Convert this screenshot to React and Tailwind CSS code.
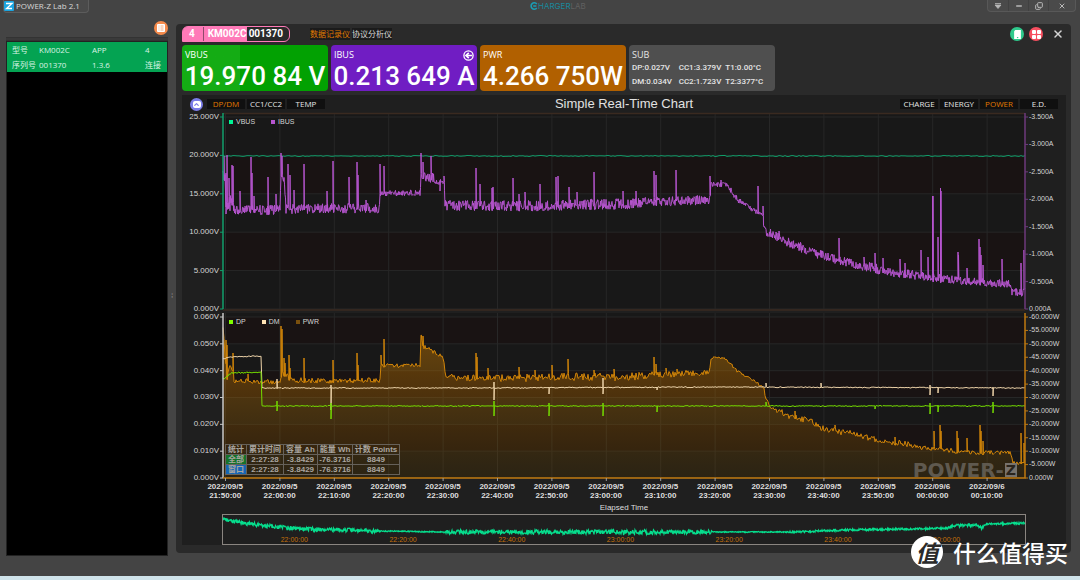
import React from 'react';
import { ChevronUp, Copy, Minus, X } from 'lucide-react';

const VBUS_TICKS = ['25.000V', '20.000V', '15.000V', '10.000V', '5.000V', '0.000V'];
const IBUS_TICKS = ['-3.500A', '-3.000A', '-2.500A', '-2.000A', '-1.500A', '-1.000A', '-0.500A', '0.000A'];
const DATA_TICKS = ['0.060V', '0.050V', '0.040V', '0.030V', '0.020V', '0.010V', '0.000V'];
const PWR_TICKS = [
  '-60.000W', '-55.000W', '-50.000W', '-45.000W', '-40.000W', '-35.000W', '-30.000W',
  '-25.000W', '-20.000W', '-15.000W', '-10.000W', '-5.000W', '0.000W',
];
const TIMES = [
  ['2022/09/5', '21:50:00'], ['2022/09/5', '22:00:00'], ['2022/09/5', '22:10:00'],
  ['2022/09/5', '22:20:00'], ['2022/09/5', '22:30:00'], ['2022/09/5', '22:40:00'],
  ['2022/09/5', '22:50:00'], ['2022/09/5', '23:00:00'], ['2022/09/5', '23:10:00'],
  ['2022/09/5', '23:20:00'], ['2022/09/5', '23:30:00'], ['2022/09/5', '23:40:00'],
  ['2022/09/5', '23:50:00'], ['2022/09/6', '00:00:00'], ['2022/09/6', '00:10:00'],
];
const OVERVIEW_TIMES = ['22:00:00', '22:20:00', '22:40:00', '23:00:00', '23:20:00', '23:40:00', '00:00:00'];

// keys: [x, y, noise], spikes: [x, top, bottom]
const IBUS = {
  keys: [
    [0, 62, 8], [2, 66, 10], [3, 88, 20], [9, 92, 16], [11, 97, 9], [50, 97, 10], [57, 96, 10],
    [58, 62, 8], [61, 68, 8], [63, 96, 10], [156, 95, 10], [157, 80, 6], [197, 80, 6], [198, 64, 10],
    [211, 65, 11], [212, 69, 5], [221, 69, 6], [222, 92, 11], [300, 93, 11], [400, 91, 11],
    [440, 88, 10], [487, 87, 10], [488, 71, 5], [504, 72, 5], [514, 86, 6], [527, 95, 5],
    [540, 103, 4], [541, 117, 10], [557, 125, 9], [567, 130, 10], [590, 139, 10], [607, 145, 9],
    [640, 153, 10], [674, 160, 10], [707, 164, 9], [740, 168, 8], [787, 171, 8], [789, 179, 8],
    [800, 180, 8], [801, 172, 10],
  ],
  spikes: [
    [1, 43], [4, 42], [3, 60, 101], [6, 65], [9, 52], [10, 53], [17, 78], [28, 44], [28.6, 60], [31, 83],
    [45, 64], [53, 81], [58, 40], [59, 43], [65, 51], [67, 62], [71, 77], [81, 51], [104, 78], [110, 48],
    [126, 64], [134, 49], [135, 62], [143, 87], [157, 51], [161, 53], [198, 40], [200, 49], [208, 43],
    [221, 63], [217, 70, 78], [253, 55], [257, 71], [269, 75], [270, 74], [290, 65], [296, 81], [302, 79],
    [317, 71], [333, 64], [335, 63], [346, 74], [354, 79], [371, 59], [400, 78], [413, 78], [431, 58],
    [433, 62], [453, 57], [487, 63], [498, 67], [535, 73], [540, 93], [556, 118], [616, 125], [641, 144],
    [652, 140], [660, 145], [677, 146], [682, 150], [698, 137], [705, 144], [709.5, 83], [710, 83],
    [715, 124], [717.5, 75], [718, 78], [735, 139], [735.5, 142], [744, 155], [756, 126], [757, 134],
    [758, 142], [760, 152], [779, 146], [798, 150], [801, 137],
  ],
};
const PWR = {
  keys: [
    [0, 16, 3], [2, 40, 30], [4, 58, 26], [9, 60, 20], [12, 67, 6], [30, 69, 5], [57, 68, 6], [59, 60, 6],
    [69, 67, 6], [110, 68, 5], [157, 67, 5], [158, 53, 4], [197, 52, 4], [198, 24, 6], [201, 34, 5],
    [208, 37, 5], [220, 44, 4], [223, 63, 6], [237, 65, 6], [300, 65, 8], [340, 64, 8], [400, 64, 8],
    [450, 61, 7], [486, 60, 6], [488, 46, 4], [492, 44, 3], [502, 45, 3], [514, 58, 3], [530, 67, 3],
    [541, 75, 3], [543, 88, 6], [550, 95, 5], [567, 103, 7], [584, 107, 8], [597, 114, 7], [624, 120, 7],
    [650, 126, 6], [677, 130, 6], [704, 135, 5], [744, 139, 5], [787, 140, 4], [790, 149, 4], [801, 151, 3],
  ],
  spikes: [
    [3, 27], [4, 32], [10, 40], [25, 61], [58, 13], [59, 16], [61, 45], [62, 50], [66, 42], [67, 55],
    [81, 45], [110, 47], [134, 40], [135, 52], [158, 42], [161, 26], [198, 22], [200, 23], [253, 40],
    [254, 44], [265, 55], [296, 54], [312, 57], [329, 52], [345, 46], [371, 57], [391, 56], [431, 44],
    [433, 51], [443, 55], [454, 56], [572, 98], [612, 112], [672, 124], [710.5, 118], [717, 112],
    [718, 118], [734, 118], [735, 125], [744, 125], [757, 112], [758, 118], [760, 128], [797.5, 120],
    [801, 130],
  ],
};
const DM = {
  keys: [[0, 46, 1], [7, 44, 1], [38, 43, 1], [39, 75, 1], [250, 75, 1], [500, 74, 1], [802, 75, 1]],
  spikes: [
    [54, 66], [108, 72, 97], [271, 69, 87], [326, 74, 81], [380, 65, 81], [434, 74, 77], [543, 70],
    [598, 70], [706.5, 72, 82], [715, 74, 80], [769.5, 74, 83],
  ],
};
const DP = {
  keys: [[0, 66, 2], [8, 60, 2], [38, 59, 1], [39, 93, 1], [802, 93, 1]],
  spikes: [
    [54, 88, 98], [108, 90, 106], [271, 88, 103], [326, 90, 103], [380, 90, 103], [434, 93, 99],
    [543, 89], [652, 93, 96], [706.5, 90, 101], [715, 92, 99], [769.5, 89, 100],
  ],
};
const VBUS = { keys: [[0, 43, 1], [802, 43, 1]], spikes: [] };
const OVERVIEW = {
  keys: [
    [0, 4, 3], [20, 8, 4], [52, 12, 4], [85, 14, 4], [152, 16, 4], [158, 16, 1], [220, 17, 1], [224, 17, 4],
    [400, 17, 5], [487, 17, 4], [490, 17, 1], [560, 17, 1], [570, 17, 2], [624, 15, 2], [690, 14, 2],
    [725, 13, 2], [730, 11, 3], [754, 10, 3], [759, 13, 3], [764, 9, 2], [802, 8, 2],
  ],
  spikes: [],
};

function createRandom(seed) {
  let value = seed;
  return () => {
    value = (value * 16807) % 2147483647;
    return value / 2147483647;
  };
}

function buildPath({ keys, spikes }, seed, step) {
  const random = createRandom(seed);
  const sorted = [...spikes].sort((a, b) => a[0] - b[0]);
  const points = [];
  let k = 0;
  let s = 0;
  for (let x = 0; x <= 802; x += step) {
    while (k < keys.length - 2 && keys[k + 1][0] <= x) k++;
    const [x0, y0, n0] = keys[k];
    const [x1, y1, n1] = keys[k + 1];
    const t = Math.min(1, (x - x0) / (x1 - x0));
    const y = y0 + (y1 - y0) * t + (random() - 0.5) * (n0 + (n1 - n0) * t);
    points.push(`${x} ${y.toFixed(1)}`);
    while (s < sorted.length && sorted[s][0] <= x) {
      const [, top, bottom] = sorted[s];
      points.push(`${x} ${top}`);
      if (bottom) points.push(`${x} ${bottom}`);
      points.push(`${x + 0.4} ${y.toFixed(1)}`);
      s++;
    }
  }
  return `M${points.join('L')}`;
}

const ibusPath = buildPath(IBUS, 17, 0.5);
const vbusPath = buildPath(VBUS, 5, 2);
const pwrPath = buildPath(PWR, 71, 1);
const dmPath = buildPath(DM, 33, 1);
const dpPath = buildPath(DP, 91, 1);
const overviewPath = buildPath(OVERVIEW, 44, 0.5);

function GridLines({ rows, bottom, redFirst, axis, rightAxis, rightRows }) {
  const rowHeight = (bottom - 4) / rows;
  const rightHeight = (bottom - 4) / rightRows;
  return (
    <g>
      <rect x="0" y="0" width="802" height={bottom} fill="#181818" />
      {Array.from({ length: rows }, (_, i) => (
        <rect
          key={i}
          x="0"
          y={4 + i * rowHeight}
          width="802"
          height={rowHeight}
          fill={(i % 2 === 0) === redFirst ? '#191313' : '#181818'}
        />
      ))}
      {Array.from({ length: rows + 1 }, (_, i) => (
        <g key={i}>
          <path d={`M0 ${4 + i * rowHeight}H802`} stroke="#272727" />
          <path d={`M-3 ${4 + i * rowHeight}H0`} stroke={axis} />
        </g>
      ))}
      {TIMES.map((_, i) => (
        <path key={i} d={`M${2.5 + i * 54.4} 0V${bottom}`} stroke="#272727" />
      ))}
      {Array.from({ length: rightRows + 1 }, (_, i) => (
        <path key={i} d={`M802 ${4 + i * rightHeight}h3`} stroke={rightAxis} />
      ))}
    </g>
  );
}

function AxisLabels({ ticks, side }) {
  return (
    <div
      className={
        side === 'left'
          ? "flex flex-col justify-between pr-1 text-right font-['Liberation_Sans',sans-serif] text-[8px] leading-[8px] text-[#d4d4d4]"
          : "flex flex-col justify-between pl-1 font-['Liberation_Sans',sans-serif] text-[7px] leading-[8px] text-[#d4d4d4]"
      }
    >
      {ticks.map((tick) => (
        <span key={tick}>{tick}</span>
      ))}
    </div>
  );
}

function Legend({ items }) {
  return (
    <ul className="absolute left-1.5 top-1 flex gap-4 font-['Liberation_Sans',sans-serif] text-[7px] leading-[10px] text-[#d4d4d4]">
      {items.map(([name, color]) => (
        <li key={name} className="flex items-center gap-[3px]">
          <span className={`size-1 ${color}`}></span>
          {name}
        </li>
      ))}
    </ul>
  );
}

function Reading({ name, value, color, children }) {
  return (
    <div className={`h-[46px] w-[146px] rounded-sm ${color}`}>
      <div className="flex items-center justify-between px-[3px] pt-1 text-[9px] leading-3">
        <span>{name}</span>
        {children}
      </div>
      <p className="whitespace-nowrap text-center font-['Roboto',sans-serif] text-[26px] font-medium leading-[30px]">{value}</p>
    </div>
  );
}

function TabButton({ label, active }) {
  return (
    <button
      type="button"
      className={`h-[10px] w-[38px] bg-[#101010] text-[8px] leading-[10px] ${active ? 'text-[#e07a00]' : 'text-[#e5e5e5]'}`}
    >
      {label}
    </button>
  );
}

function TitleBar() {
  return (
    <header className="relative flex h-[13px] items-start justify-between">
      <div className="ml-[3px] flex h-[13px] items-center gap-0.5 rounded-b-sm border border-t-0 border-[#5c5c5c] bg-[#4a4a4a] pr-2 text-[8px] leading-3 text-[#d8d8d8]">
        <svg viewBox="0 0 10 10" className="size-[10px]">
          <rect width="10" height="10" rx="1" fill="#1ba5e0" />
          <path d="M2 2.5H8L2.5 7.5H8" fill="none" stroke="#fff" strokeWidth="1.3" />
        </svg>
        POWER-Z Lab 2.1
      </div>
      <div className="absolute left-1/2 top-0 flex h-3 -translate-x-[10px] items-center font-['Inter',sans-serif] text-[8px] leading-3 text-[#19889b]">
        <svg viewBox="0 0 10 10" className="size-2">
          <path d="M8.5 2.5A4 4 0 1 0 8.5 7.5M8 5H4" fill="none" stroke="#1a9db5" strokeWidth="2" />
        </svg>
        <span>HARGER</span>
        <span className="text-[#606060]">LAB</span>
      </div>
      <div className="mr-1 flex h-3 rounded-b-sm border border-t-0 border-[#585858] bg-[#4a4a4a] text-[#b8b8b8]">
        <button type="button" aria-label="Menu" className="flex w-5 items-center justify-center">
          <svg viewBox="0 0 8 8" className="size-2">
            <path d="M1 1.5H7M1 3H7L4 6.5Z" fill="currentColor" stroke="currentColor" strokeWidth="0.8" />
          </svg>
        </button>
        <button type="button" aria-label="Minimize" className="flex w-5 items-center justify-center border-l border-[#414141]">
          <Minus className="size-2" strokeWidth={4} />
        </button>
        <button type="button" aria-label="Restore" className="flex w-5 items-center justify-center border-l border-[#414141]">
          <Copy className="size-2 -scale-y-100" strokeWidth={3} />
        </button>
        <button type="button" aria-label="Close" className="flex w-[27px] items-center justify-center border-l border-[#414141]">
          <X className="size-2" strokeWidth={3} />
        </button>
      </div>
    </header>
  );
}

function DeviceList() {
  return (
    <aside className="flex w-[168px] shrink-0 flex-col pb-5 pl-1.5">
      <div className="flex h-6 items-center justify-end pt-1.5">
        <button type="button" aria-label="Device list" className="flex size-[14px] items-center justify-center rounded-full bg-[#f58a4b]">
          <svg viewBox="0 0 8 8" className="size-2">
            <rect width="8" height="8" rx="1" fill="#fff" />
            <path d="M1.5 2H2.5M3.5 2H6.5M1.5 4H2.5M3.5 4H6.5M1.5 6H2.5M3.5 6H6.5" stroke="#f58a4b" strokeWidth="0.7" />
          </svg>
        </button>
      </div>
      <div className="h-1 border-y border-[#333333] bg-[#3a3a3a]"></div>
      <div className="flex-1 border border-[#222222] bg-black">
        <table className="w-full table-fixed bg-[#04a352] text-left text-[8px] leading-[15px] text-[#d9f3e4]">
          <tbody>
            <tr>
              <td className="w-8 pl-[5px]">型号</td>
              <td className="w-[53px]">KM002C</td>
              <td className="w-[53px]">APP</td>
              <td>4</td>
            </tr>
            <tr>
              <td className="whitespace-nowrap pl-[5px]">序列号</td>
              <td>001370</td>
              <td>1.3.6</td>
              <td>连接</td>
            </tr>
          </tbody>
        </table>
      </div>
    </aside>
  );
}

function DeviceHeader() {
  return (
    <div className="flex h-4 items-center text-white">
      <div className="flex h-4 items-center rounded-r-md rounded-tl-md border border-[#ff7ab8] font-['Roboto',sans-serif] text-[10px] font-bold leading-[14px]">
        <span className="flex h-full items-center rounded-tl-sm bg-[#ff7ab8] pl-1.5">
          <span className="border-r border-[#8f4a6c] pr-2">4</span>
          <span className="pl-1">KM002C</span>
        </span>
        <span className="pl-0.5 pr-1.5">001370</span>
      </div>
      <nav className="ml-5 flex gap-0.5 text-[8px] leading-3">
        <a href="#recorder" className="bg-[#1b1b1b] text-[#e07a00]">数据记录仪</a>
        <a href="#protocol" className="bg-[#1b1b1b] text-[#d8d8d8]">协议分析仪</a>
      </nav>
      <div className="ml-auto flex items-center gap-[5px] pr-0.5">
        <button type="button" aria-label="Device" className="flex size-[14px] items-center justify-center rounded-full bg-[#2fc98c]">
          <svg viewBox="0 0 8 8" className="size-[9px]">
            <path d="M2 0H7V8H1V1Z" fill="#fff" />
            <path d="M3.5 6.7H4.7" stroke="#2fc98c" />
          </svg>
        </button>
        <button type="button" aria-label="Layout" className="flex size-[14px] items-center justify-center rounded-full bg-[#f74f60]">
          <svg viewBox="0 0 9 9" className="size-[9px]" fill="#fff">
            <rect width="4" height="4" rx="1" />
            <rect x="5" width="4" height="4" rx="1" />
            <rect y="5" width="4" height="4" rx="1" />
            <rect x="5" y="5" width="4" height="4" rx="1" />
          </svg>
        </button>
        <button type="button" aria-label="Close panel" className="ml-1 flex size-3 items-center justify-center text-[#d4d4d4]">
          <X className="size-3" strokeWidth={3} />
        </button>
      </div>
    </div>
  );
}

function Readings() {
  return (
    <div className="mt-[3px] flex gap-[3px] text-white">
      <Reading name="VBUS" value="19.970 84 V" color="bg-linear-to-r from-[#14ac14] from-40% to-[#02a102] to-40%" />
      <Reading name="IBUS" value="0.213 649 A" color="bg-[#701dc3]">
        <svg viewBox="0 0 11 11" className="size-[11px]" fill="none" stroke="#fff">
          <circle cx="5.5" cy="5.5" r="4.6" strokeWidth="1.3" />
          <path d="M9 5.5H3M5.8 2.8L3 5.5L5.8 8.2" strokeWidth="1.7" />
        </svg>
      </Reading>
      <Reading name="PWR" value="4.266 750W" color="bg-[#b16000]" />
      <div className="h-[46px] w-[146px] rounded-sm bg-[#4f4f4f] px-[3px] pt-1 text-[9px] leading-3 text-[#e5e5e5]">
        <div>SUB</div>
        <div className="grid grid-cols-3 whitespace-nowrap font-['Roboto',sans-serif] text-[8px] font-medium leading-[14px]">
          <span>DP:0.027V</span>
          <span>CC1:3.379V</span>
          <span>T1:0.00°C</span>
          <span>DM:0.034V</span>
          <span>CC2:1.723V</span>
          <span>T2:3377°C</span>
        </div>
      </div>
    </div>
  );
}

function StatsTable() {
  const cell = 'border border-[#66615a]';
  return (
    <table className="absolute bottom-[7px] left-[2px] w-[175px] table-fixed border-collapse whitespace-nowrap text-center font-['Liberation_Sans','Noto_Sans_CJK_SC',sans-serif] text-[8px] font-bold leading-[9px] text-[#aaa6a0]">
      <thead>
        <tr>
          <th className={`w-[21px] ${cell}`}>统计</th>
          <th className={`w-[37px] ${cell}`}>累计时间</th>
          <th className={`w-[34px] ${cell}`}>容量 Ah</th>
          <th className={`w-[35px] ${cell}`}>能量 Wh</th>
          <th className={cell}>计数 Points</th>
        </tr>
      </thead>
      <tbody>
        <tr>
          <td className={`bg-[#15732c] ${cell}`}>全部</td>
          <td className={cell}>2:27:28</td>
          <td className={cell}>-3.8429</td>
          <td className={cell}>-76.3716</td>
          <td className={cell}>8849</td>
        </tr>
        <tr>
          <td className={`bg-[#1666b4] ${cell}`}>窗口</td>
          <td className={cell}>2:27:28</td>
          <td className={cell}>-3.8429</td>
          <td className={cell}>-76.3716</td>
          <td className={cell}>8849</td>
        </tr>
      </tbody>
    </table>
  );
}

function ChartPanel() {
  return (
    <section className="mt-1 flex flex-1 flex-col bg-[#1f1f1f]">
      <div className="grid h-[18px] grid-cols-[1fr_auto_1fr] items-center px-2">
        <div className="flex items-center gap-0.5">
          <button type="button" aria-label="Collapse" className="mr-0.5 flex size-[13px] items-center justify-center rounded-full bg-[#7b7de8]">
            <span className="flex h-[7px] w-2 items-center justify-center rounded-xs bg-white text-[#7b7de8]">
              <ChevronUp className="size-[7px]" strokeWidth={4} />
            </span>
          </button>
          <TabButton label="DP/DM" active />
          <TabButton label="CC1/CC2" />
          <TabButton label="TEMP" />
        </div>
        <h1 className="font-['Liberation_Sans',sans-serif] text-[13px] leading-4 text-[#e2e2e2]">Simple Real-Time Chart</h1>
        <div className="flex justify-end gap-0.5">
          <TabButton label="CHARGE" />
          <TabButton label="ENERGY" />
          <TabButton label="POWER" active />
          <TabButton label="E.D." />
        </div>
      </div>

      <div className="grid min-h-40 flex-[200] grid-cols-[41px_1fr_41px]">
        <AxisLabels ticks={VBUS_TICKS} side="left" />
        <div className="relative">
          <svg viewBox="0 0 802 200" preserveAspectRatio="none" className="absolute size-full overflow-visible" fill="none">
            <GridLines rows={5} bottom={196} redFirst={false} axis="#12a06c" rightAxis="#6e3a7c" rightRows={7} />
            <path d="M0 0.5H802M0 197H802" stroke="#3a2a20" strokeWidth="1.5" />
            <path d={vbusPath} stroke="#0f9f6a" />
            <path d={ibusPath} stroke="#b655cf" />
            <path d="M0 0V196" stroke="#12a06c" strokeWidth="1.5" />
            <path d="M802 0V196" stroke="#6e3a7c" strokeWidth="1.5" />
          </svg>
          <Legend items={[['VBUS', 'bg-[#00f595]'], ['IBUS', 'bg-[#b655cf]']]} />
        </div>
        <AxisLabels ticks={IBUS_TICKS} side="right" />
      </div>

      <div className="grid min-h-32 flex-[169] grid-cols-[41px_1fr_41px]">
        <AxisLabels ticks={DATA_TICKS} side="left" />
        <div className="relative">
          <svg viewBox="0 0 802 169" preserveAspectRatio="none" className="absolute size-full overflow-visible" fill="none">
            <defs>
              <linearGradient id="power-fill" x1="0" y1="12" x2="0" y2="165" gradientUnits="userSpaceOnUse">
                <stop offset="0" stopColor="#c47800" stopOpacity="0.5" />
                <stop offset="0.5" stopColor="#a86600" stopOpacity="0.35" />
                <stop offset="1" stopColor="#785000" stopOpacity="0.2" />
              </linearGradient>
            </defs>
            <GridLines rows={6} bottom={165} redFirst axis="#c8c8c8" rightAxis="#c07a10" rightRows={12} />
            <path d={`${pwrPath}L802 165H0Z`} fill="url(#power-fill)" />
            <path d={pwrPath} stroke="#d08408" />
            <path d={dmPath} stroke="#ecd2a8" />
            <path d={dpPath} stroke="#74dc00" />
            <path d="M0 0V165" stroke="#c8c8c8" strokeWidth="1.5" />
            <path d="M0 165H802V0" stroke="#c07a10" strokeWidth="1.5" />
            {TIMES.map((_, i) => (
              <path key={i} d={`M${2.5 + i * 54.4} 165v3`} stroke="#a0a0a0" />
            ))}
          </svg>
          <Legend items={[['DP', 'bg-[#7fff00]'], ['DM', 'bg-[#ffe4b5]'], ['PWR', 'bg-[#7a500e]']]} />
          <StatsTable />
          <div className="absolute bottom-[5px] right-2 flex items-center gap-px font-['DejaVu_Sans',sans-serif] text-[20px] font-bold leading-[14px] text-[#5f594f]">
            POWER-
            <span className="bg-[#77726c] px-px text-[14px] leading-[14px] text-[#2a241c]">Z</span>
          </div>
        </div>
        <AxisLabels ticks={PWR_TICKS} side="right" />
      </div>

      <div className="px-[41px] font-['Liberation_Sans',sans-serif] text-[8px] text-[#dedede]">
        <div className="-ml-[25px] mr-[11px] grid grid-cols-15 text-center font-bold leading-[9px]">
          {TIMES.map(([date, time]) => (
            <div key={time}>
              <div>{date}</div>
              <div>{time}</div>
            </div>
          ))}
        </div>
        <div className="h-[14px] pt-0.5 text-center leading-3">Elapsed Time</div>
      </div>

      <div className="relative mx-[40px] h-[31px] border border-[#8a8580]">
        <svg viewBox="0 0 802 29" preserveAspectRatio="none" className="absolute size-full" fill="none">
          <path d={overviewPath} stroke="#06dd8d" strokeWidth="1.3" />
        </svg>
        <div className="ml-[17px] mr-6 grid grid-cols-7 pt-5 text-center font-['Liberation_Sans',sans-serif] text-[7px] leading-[9px] text-[#c46f0a]">
          {OVERVIEW_TIMES.map((time) => (
            <span key={time}>{time}</span>
          ))}
        </div>
      </div>
    </section>
  );
}

function App() {
  return (
    <div className="relative flex min-h-screen flex-col border-b-4 border-[#cfe3ea] bg-[#444444] font-['Open_Sans','Noto_Sans_CJK_SC',sans-serif]">
      <TitleBar />
      <div className="flex flex-1">
        <DeviceList />
        <div className="flex w-2 shrink-0 items-center justify-center text-[8px] text-[#888888]">⁞</div>
        <main className="mb-[23px] mr-[9px] mt-[11px] flex min-w-0 flex-1 flex-col rounded bg-[#2a2a2a] pb-2 pl-1.5 pr-[5px] pt-0.5">
          <DeviceHeader />
          <Readings />
          <ChartPanel />
        </main>
      </div>
      <div className="absolute bottom-2 right-3 flex items-center gap-2.5 font-['Noto_Sans_CJK_SC',sans-serif] text-[23px] font-medium leading-8 text-white">
        <span className="flex size-8 items-center justify-center rounded-full bg-white font-bold italic text-[#2a2a2a]">值</span>
        <span>什么值得买</span>
      </div>
    </div>
  );
}

export default App;
